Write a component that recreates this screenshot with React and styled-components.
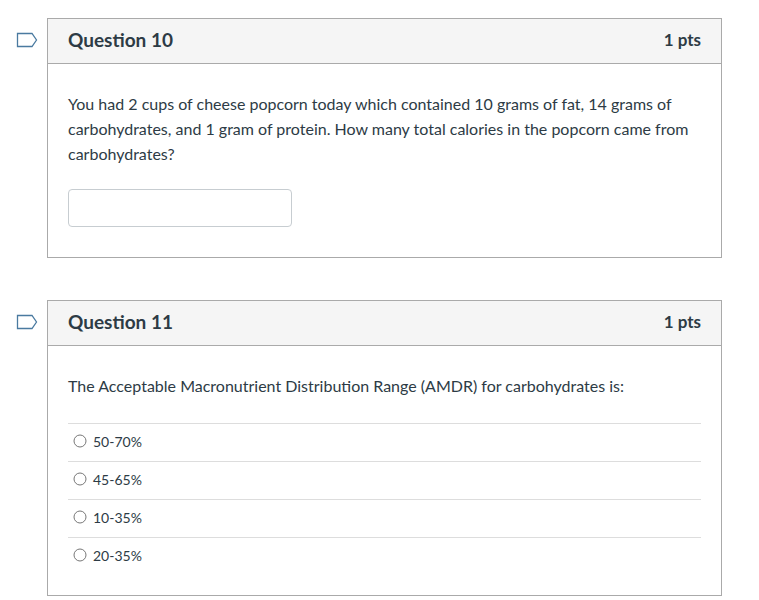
import React from "react";
import styled, { createGlobalStyle } from "styled-components";

const GlobalStyle = createGlobalStyle`
  body {
    margin: 0;
    background: #fff;
    font-family: Lato, "Open Sans", sans-serif;
    color: #2d3b45;
  }
`;

const questions = [
  {
    id: 10,
    points: "1 pts",
    text: "You had 2 cups of cheese popcorn today which contained 10 grams of fat, 14 grams of carbohydrates, and 1 gram of protein. How many total calories in the popcorn came from carbohydrates?",
    type: "short",
  },
  {
    id: 11,
    points: "1 pts",
    text: "The Acceptable Macronutrient Distribution Range (AMDR) for carbohydrates is:",
    type: "choice",
    answers: ["50-70%", "45-65%", "10-35%", "20-35%"],
  },
];

function Flag() {
  return (
    <FlagIcon width="22" height="16" viewBox="0 0 22 16">
      <path
        d="M1.5 1.5 H16 L20.5 8 L16 14.5 H1.5 Z"
        fill="none"
        stroke="#4a7aa0"
        strokeWidth="1.3"
        strokeLinejoin="miter"
      />
    </FlagIcon>
  );
}

function Radio() {
  return (
    <RadioIcon width="14" height="14" viewBox="0 0 14 14">
      <circle cx="7" cy="7" r="6" fill="#fff" stroke="#777" strokeWidth="1" />
    </RadioIcon>
  );
}

export default function App() {
  return (
    <>
      <GlobalStyle />
      <Page>
        {questions.map((q) => (
          <QuestionRow key={q.id}>
            <Flag />
            <Card>
              <Header>
                <Title>Question {q.id}</Title>
                <Points>{q.points}</Points>
              </Header>
              <Body>
                <QuestionText>{q.text}</QuestionText>
                {q.type === "short" && <AnswerInput type="text" />}
                {q.type === "choice" && (
                  <AnswerList>
                    {q.answers.map((a) => (
                      <AnswerItem key={a}>
                        <Radio />
                        <AnswerLabel>{a}</AnswerLabel>
                      </AnswerItem>
                    ))}
                  </AnswerList>
                )}
              </Body>
            </Card>
          </QuestionRow>
        ))}
      </Page>
    </>
  );
}

const Page = styled.div`
  display: flex;
  flex-direction: column;
  gap: 42px;
  padding: 18px 0 0 16px;
`;

const QuestionRow = styled.div`
  display: flex;
  align-items: flex-start;
  gap: 9px;
`;

const FlagIcon = styled.svg`
  flex: none;
  margin-top: 14px;
`;

const Card = styled.div`
  width: 675px;
  box-sizing: border-box;
  border: 1px solid #aaaaaa;
  background: #fff;
`;

const Header = styled.div`
  display: flex;
  align-items: center;
  justify-content: space-between;
  height: 45px;
  box-sizing: border-box;
  padding: 0 20px 3px 20px;
  background: #f5f5f5;
  border-bottom: 1px solid #aaaaaa;
`;

const Title = styled.h2`
  margin: 0;
  font-size: 19px;
  line-height: 1;
  font-weight: 700;
  color: #2d3b45;
`;

const Points = styled.span`
  font-size: 17px;
  line-height: 1;
  font-weight: 700;
  color: #2d3b45;
`;

const Body = styled.div`
  padding: 27px 20px 30px 20px;
`;

const QuestionText = styled.p`
  margin: 0;
  font-size: 16px;
  line-height: 25px;
  color: #2d3b45;
`;

const AnswerInput = styled.input`
  display: block;
  margin-top: 23px;
  width: 224px;
  height: 38px;
  box-sizing: border-box;
  border: 1px solid #c7cdd1;
  border-radius: 4px;
  background: #fff;
`;

const AnswerList = styled.div`
  margin-top: 25px;
  margin-bottom: -10px;
`;

const AnswerItem = styled.div`
  display: flex;
  align-items: center;
  gap: 6px;
  height: 38px;
  box-sizing: border-box;
  padding: 0 0 3px 5px;
  border-top: 1px solid #dddddd;
`;

const RadioIcon = styled.svg`
  flex: none;
`;

const AnswerLabel = styled.span`
  font-size: 14px;
  color: #2d3b45;
`;
